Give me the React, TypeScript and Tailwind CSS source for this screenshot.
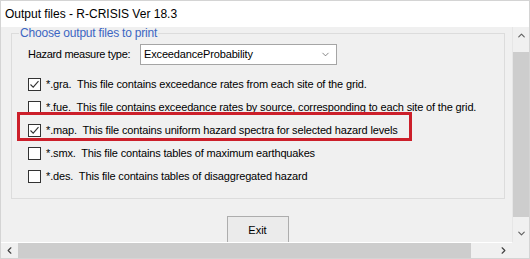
import { ChevronDown, ChevronUp, ChevronLeft, ChevronRight } from 'lucide-react';

function CheckBox({ checked }: { checked: boolean }) {
  return (
    <span className="w-[13px] h-[13px] shrink-0 border border-[#333333] bg-white flex items-center justify-center">
      {checked && (
        <svg width="11" height="11" viewBox="0 0 11 11">
          <path d="M1.5 5.5 L4.2 8.2 L9.5 2.2" fill="none" stroke="#333333" strokeWidth="1.1" />
        </svg>
      )}
    </span>
  );
}

const files = [
  { ext: '*.gra.', desc: 'This file contains exceedance rates from each site of the grid.', checked: true },
  { ext: '*.fue.', desc: 'This file contains exceedance rates by source, corresponding to each site of the grid.', checked: false },
  { ext: '*.map.', desc: 'This file contains uniform hazard spectra for selected hazard levels', checked: true },
  { ext: '*.smx.', desc: 'This file contains tables of maximum earthquakes', checked: false },
  { ext: '*.des.', desc: 'This file contains tables of disaggregated hazard', checked: false },
];

export default function App() {
  return (
    <div className="w-[530px] h-[259px] border border-[#d4d4d4] bg-white flex flex-col overflow-hidden font-['Liberation_Sans',Arial,sans-serif] text-black">
      {/* Title bar */}
      <div className="h-[26px] shrink-0 flex items-center pl-[4px] text-[12px]">
        Output files - R-CRISIS Ver 18.3
      </div>

      {/* Client area with scrollbars */}
      <div className="flex-1 grid grid-cols-[1fr_17px] grid-rows-[1fr_16px] bg-[#f0f0f0] min-h-0">
        <div className="relative overflow-hidden min-h-0">
          {/* Group box */}
          <div className="relative ml-[10px] mt-[6px] w-[494px] h-[166px] border border-[#dcdcdc]">
            <span className="absolute left-[7px] -top-[8px] px-[1px] bg-[#f0f0f0] text-[12px] leading-[14px] tracking-[-0.2px] text-[#3c66c2] whitespace-nowrap">
              Choose output files to print
            </span>

            <div className="pl-[16px] pt-[10px] text-[11px] tracking-[-0.15px]">
              <div className="flex items-center h-[21px]">
                <span className="w-[112px] shrink-0 whitespace-nowrap tracking-[-0.3px]">Hazard measure type:</span>
                <div className="w-[197px] h-[21px] bg-white border border-[#a5a5a5] flex items-center justify-between pl-[3px] pr-[5px]">
                  <span>ExceedanceProbability</span>
                  <ChevronDown size={11} strokeWidth={1.5} className="text-[#505050]" />
                </div>
              </div>

              <div className="flex flex-col gap-[10px] mt-[13px]">
                {files.map((f, i) => (
                  <div key={i} className="flex items-center gap-[5px] h-[13px]">
                    <CheckBox checked={f.checked} />
                    <span className="whitespace-nowrap">
                      {f.ext}&nbsp; {f.desc}
                    </span>
                  </div>
                ))}
              </div>
            </div>

            {/* annotation highlight */}
            <div className="absolute left-[5px] top-[78px] w-[395px] h-[29px] border-[3px] border-[#cc1f2a]" />
          </div>

          {/* Exit button */}
          <div className="flex justify-center w-[512px] mt-[17px] pl-[1px]">
            <button className="w-[62px] h-[28px] border border-[#adadad] bg-[#ebebeb] text-[11px]">
              Exit
            </button>
          </div>
        </div>

        {/* Vertical scrollbar */}
        <div className="flex flex-col items-center bg-[#f0f0f0] border-l border-[#e6e6e6]">
          <div className="h-[17px] flex items-center justify-center">
            <ChevronUp size={11} strokeWidth={2.5} className="text-[#606060]" />
          </div>
          <div className="flex-1 w-full pt-[8px] flex">
            <div className="flex-1 mb-[8px] bg-[#cdcdcd]" />
          </div>
          <div className="h-[17px] flex items-center justify-center">
            <ChevronDown size={11} strokeWidth={2.5} className="text-[#606060]" />
          </div>
        </div>

        {/* Horizontal scrollbar */}
        <div className="flex items-center bg-[#f0f0f0] border-t border-[#ffffff]">
          <div className="w-[17px] h-full flex items-center justify-center">
            <ChevronLeft size={11} strokeWidth={2.5} className="text-[#404040]" />
          </div>
          <div className="flex-1 h-full bg-[#cdcdcd] mr-[24px]" />
          <div className="w-[17px] h-full flex items-center justify-center">
            <ChevronRight size={11} strokeWidth={2.5} className="text-[#404040]" />
          </div>
        </div>
        <div className="bg-[#f0f0f0]" />
      </div>
    </div>
  );
}
